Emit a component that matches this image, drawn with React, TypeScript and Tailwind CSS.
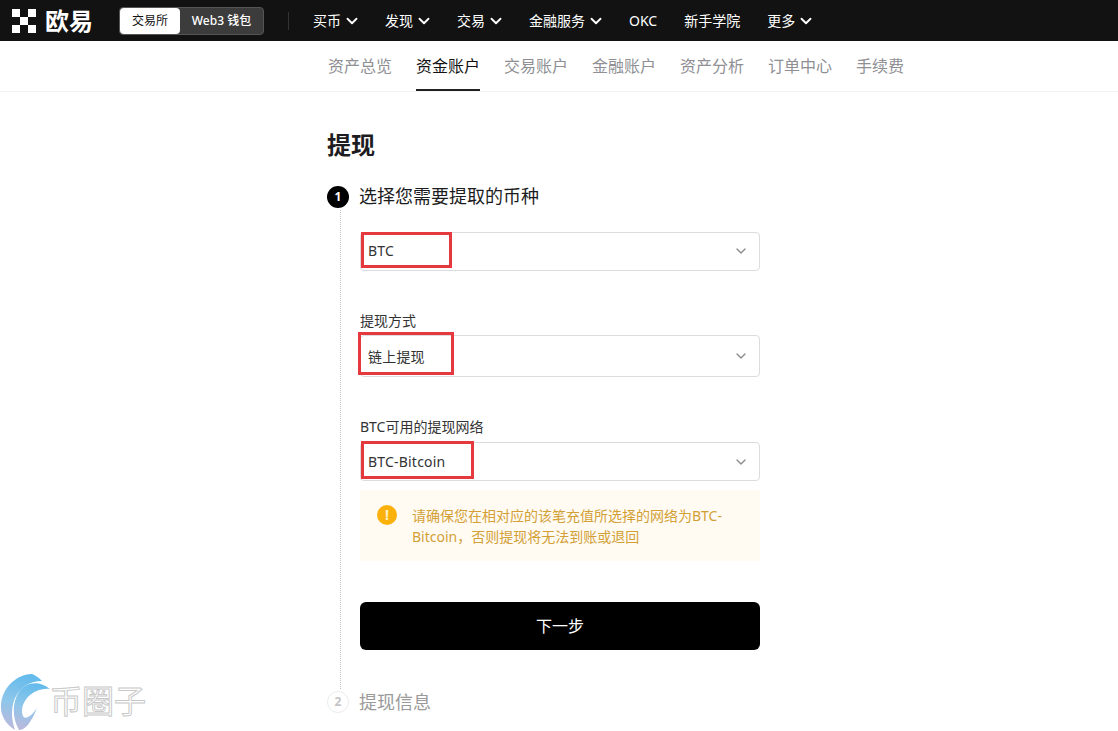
import { ChevronDown } from "lucide-react";

const FONT = "[font-family:'Noto_Sans','Noto_Sans_CJK_SC',sans-serif]";

const NAV_ITEMS = [
  { label: "买币", arrow: true },
  { label: "发现", arrow: true },
  { label: "交易", arrow: true },
  { label: "金融服务", arrow: true },
  { label: "OKC", arrow: false },
  { label: "新手学院", arrow: false },
  { label: "更多", arrow: true },
];

const TABS = ["资产总览", "资金账户", "交易账户", "金融账户", "资产分析", "订单中心", "手续费"];

function Logo() {
  return (
    <div className="flex items-center gap-[9px]">
      <svg width="24" height="24" viewBox="0 0 24 24" fill="#fff">
        <rect x="0" y="0" width="8" height="8" />
        <rect x="16" y="0" width="8" height="8" />
        <rect x="8" y="8" width="8" height="8" />
        <rect x="0" y="16" width="8" height="8" />
        <rect x="16" y="16" width="8" height="8" />
      </svg>
      <span className="text-[24px] leading-none font-bold text-white">欧易</span>
    </div>
  );
}

function Header() {
  return (
    <header className="flex h-[41px] items-center bg-[#121212] pl-3">
      <Logo />
      <div className="ml-[26px] flex h-[28px] w-[145px] rounded-[4px] border border-[#555555] bg-[#3c3c3c] text-[12px]">
        <div className="flex w-[60px] items-center justify-center rounded-[4px] bg-white text-[#121212]">交易所</div>
        <div className="flex flex-1 items-center justify-center font-medium text-white">Web3 钱包</div>
      </div>
      <div className="mr-[24px] ml-[24px] h-[18px] w-px bg-[#333333]" />
      <nav className="flex items-center gap-[27px]">
        {NAV_ITEMS.map((item) => (
          <div key={item.label} className="flex items-center text-[14px] text-white">
            <span>{item.label}</span>
            {item.arrow && <ChevronDown size={18} strokeWidth={2.5} className="-mr-[3px] ml-[2px]" />}
          </div>
        ))}
      </nav>
    </header>
  );
}

function SubNav() {
  return (
    <div className="flex h-[51px] gap-6 border-b border-[#f2f2f2] pl-[328px]">
      {TABS.map((tab) => (
        <div
          key={tab}
          className={
            tab === "资金账户"
              ? "flex h-[50px] items-center border-b-2 border-[#222222] pt-[1px] text-[16px] text-[#121212]"
              : "flex h-[50px] items-center pb-[1px] text-[16px] text-[#8f8f94]"
          }
        >
          {tab}
        </div>
      ))}
    </div>
  );
}

function SelectBox({ value, height }: { value: string; height: string }) {
  return (
    <div className={`flex items-center justify-between rounded-[4px] border border-[#dcdcdc] pr-[10px] pl-[7px] text-[14px] tracking-[0.2px] text-[#333333] ${height}`}>
      <span>{value}</span>
      <ChevronDown size={16} strokeWidth={2} className="text-[#8a8a8a]" />
    </div>
  );
}

function Notice() {
  return (
    <div className="mt-[9px] flex h-[71px] gap-[15px] bg-[#fffbf3] pt-[15px] pl-[17px]">
      <div className="flex h-5 w-5 shrink-0 items-center justify-center rounded-full bg-[#fbb10c] text-[14px] leading-none font-bold text-[#fff3d0]">!</div>
      <p className="w-[320px] text-[14px] leading-[21px] text-[#d3a035]">
        请确保您在相对应的该笔充值所选择的网络为BTC-Bitcoin，否则提现将无法到账或退回
      </p>
    </div>
  );
}

function Watermark() {
  return (
    <div className="absolute bottom-0 left-0 flex h-[60px] w-[150px] items-center">
      <svg width="52" height="60" viewBox="0 0 52 60">
        <defs>
          <linearGradient id="swoosh" x1="0.6" y1="0" x2="0.4" y2="1">
            <stop offset="0" stopColor="#62bbec" />
            <stop offset="0.55" stopColor="#8fc6ea" />
            <stop offset="1" stopColor="#b9b9dc" />
          </linearGradient>
        </defs>
        <path d="M32 3C18 3 3 15 1 33C0 43 5 53 15 59C11 48 11 36 15 27C20 17 29 10 42 10C38 6 35 4 32 3Z" fill="url(#swoosh)" />
        <path d="M50 18C39 9 26 11 19 21C12 31 12 47 19 59C25 59 31 52 37 37C31 46 25 49 23 45C20 38 24 29 30 24C36 19 44 17 50 18Z" fill="url(#swoosh)" />
      </svg>
      <span className="-ml-[2px] text-[32px] leading-none text-white [-webkit-text-stroke:1px_#c9c9c9]">币圈子</span>
    </div>
  );
}

export default function App() {
  return (
    <div className={`relative h-[731px] w-[1118px] overflow-hidden bg-white ${FONT}`}>
      <Header />
      <SubNav />
      <main className="pl-[327px]">
        <h1 className="mt-[36px] text-[24px] leading-[34px] font-bold text-[#1c1c21]">提现</h1>
        <div className="mt-[21px] flex items-center gap-[10px]">
          <div className="flex h-[22px] w-[22px] items-center justify-center rounded-full bg-black text-[12px] font-bold text-white">1</div>
          <span className="pb-[1px] text-[18px] leading-[26px] text-[#1c1c21]">选择您需要提取的币种</span>
        </div>
        <div className="ml-[13px] w-[420px] border-l border-dotted border-[#c4c4c4] pt-[22px] pb-[39px] pl-[19px]">
          <div className="relative">
            <SelectBox value="BTC" height="h-[39px] pb-[2px]" />
            <div className="absolute top-0 left-[1px] h-[36px] w-[91px] border-[3px] border-[#e5393f]" />
          </div>
          <div className="mt-[40px] mb-[4px] text-[14px] leading-[20px] text-[#333333]">提现方式</div>
          <div className="relative">
            <SelectBox value="链上提现" height="h-[42px]" />
            <div className="absolute -top-[3px] -left-[2px] h-[43px] w-[96px] border-[3px] border-[#e5393f]" />
          </div>
          <div className="mt-[40px] mb-[5px] text-[14px] leading-[20px] text-[#333333]">BTC可用的提现网络</div>
          <div className="relative">
            <SelectBox value="BTC-Bitcoin" height="h-[39px]" />
            <div className="absolute -top-[1px] left-[1px] h-[38px] w-[113px] border-[3px] border-[#e5393f]" />
          </div>
          <Notice />
          <button className="mt-[41px] flex h-[48px] w-full items-center justify-center rounded-[6px] bg-black text-[16px] text-white">下一步</button>
        </div>
        <div className="flex items-center gap-[10px]">
          <div className="flex h-[22px] w-[22px] items-center justify-center rounded-full border border-[#ececec] text-[12px] font-bold text-[#c4c4c4]">2</div>
          <span className="text-[18px] leading-[26px] text-[#9a9a9a]">提现信息</span>
        </div>
      </main>
      <Watermark />
    </div>
  );
}
